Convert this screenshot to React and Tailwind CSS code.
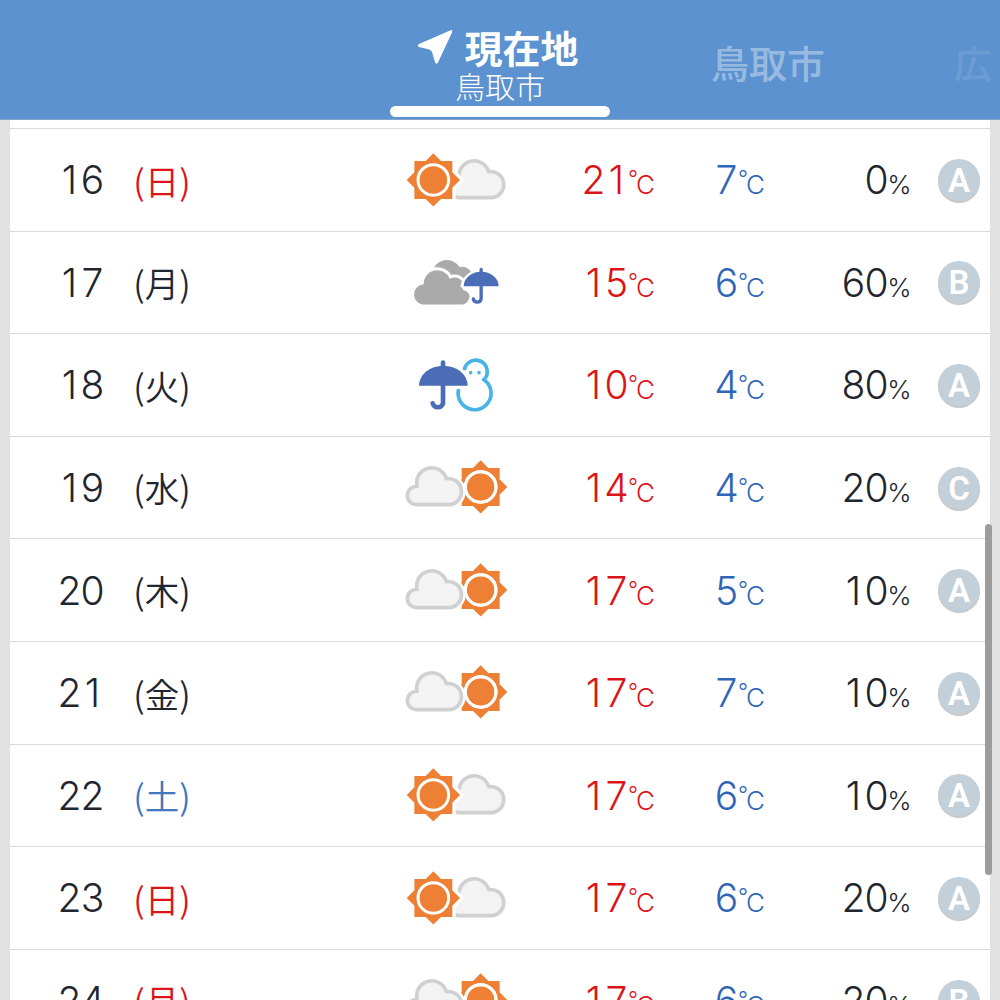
const days = [
  { date: 16, day: '日', icon: 'sunCloud', high: 21, low: 7, rain: 0, grade: 'A' },
  { date: 17, day: '月', icon: 'cloudRain', high: 15, low: 6, rain: 60, grade: 'B' },
  { date: 18, day: '火', icon: 'rainSnow', high: 10, low: 4, rain: 80, grade: 'A' },
  { date: 19, day: '水', icon: 'cloudSun', high: 14, low: 4, rain: 20, grade: 'C' },
  { date: 20, day: '木', icon: 'cloudSun', high: 17, low: 5, rain: 10, grade: 'A' },
  { date: 21, day: '金', icon: 'cloudSun', high: 17, low: 7, rain: 10, grade: 'A' },
  { date: 22, day: '土', icon: 'sunCloud', high: 17, low: 6, rain: 10, grade: 'A' },
  { date: 23, day: '日', icon: 'sunCloud', high: 17, low: 6, rain: 20, grade: 'A' },
  { date: 24, day: '月', holiday: true, icon: 'cloudSun', high: 17, low: 6, rain: 20, grade: 'B' },
];

function dayColor({ day, holiday }) {
  if (day === '日' || holiday) return 'text-[#dc1418]';
  if (day === '土') return 'text-[#3f77c0]';
  return 'text-[#1f2630]';
}

function Sun({ x }) {
  return (
    <g transform={`translate(${x} 153)`}>
      <path
        d="M-57 -57H-23L0 -80L23 -57H57V-23L80 0L57 23V57H23L0 80L-23 57H-57V23L-80 0L-57 -23Z"
        fill="#ee8035"
        stroke="#fff"
        strokeWidth="20"
        strokeLinejoin="round"
        paintOrder="stroke"
      />
      <circle r="46" fill="none" stroke="#fff" strokeWidth="9" />
    </g>
  );
}

function Cloud({ x = 0 }) {
  const d = 'M78 206A27.500 27.500 0 0 1 81 151A45.500 45.500 0 0 1 169 128A38.800 38.800 0 1 1 181 206Z';
  return (
    <g transform={`translate(${x} 0)`} strokeLinejoin="round">
      <path d={d} fill="#fff" stroke="#fff" strokeWidth="25" />
      <path d={d} fill="#f3f3f3" stroke="#d0d0d0" strokeWidth="11" />
    </g>
  );
}

function WeatherIcon({ name }) {
  return (
    <svg viewBox="0 0 390 308" className="w-[130px] h-[102.6px] shrink-0">
      {name === 'sunCloud' && (
        <>
          <Cloud x={127} />
          <Sun x={130} />
        </>
      )}
      {name === 'cloudSun' && (
        <>
          <Sun x={272} />
          <Cloud />
          <circle cx="272" cy="153" r="46" fill="none" stroke="#fff" strokeWidth="9" />
        </>
      )}
      {name === 'cloudRain' && (
        <g transform="translate(1 39)">
          <path d="M126 85A44 44 0 0 1 207 69Q228 65 242 83L215 120H150Z" fill="#aaa" />
          <path
            d="M103 182A30.500 30.500 0 0 1 100 121A40.500 40.500 0 0 1 178 104Q201 94 216 112Q208 127 219 138Q236 142 238 158Q234 178 218 182Z"
            fill="#aaa"
            stroke="#fff"
            strokeWidth="18"
            strokeLinejoin="round"
            paintOrder="stroke"
          />
          <path d="M210 128Q217 88 263 76V65H281V76Q325 84 337 128L284 137V180H240V160H258V137Z" fill="#fff" />
          <path d="M220 127A52.500 44 0 0 1 325 127Z" fill="#4b6cb7" />
          <path d="M272.500 76V165A12 12 0 0 1 249 165" fill="none" stroke="#4b6cb7" strokeWidth="10" strokeLinecap="round" />
        </g>
      )}
      {name === 'rainSnow' && (
        <g transform="translate(0 34)">
          <path d="M223 75A34.500 34.500 0 1 1 282 103A49.500 49.500 0 1 1 206 131" fill="none" stroke="#48b4e6" strokeWidth="11" />
          <circle cx="242" cy="82" r="5.500" fill="#48b4e6" />
          <circle cx="267" cy="82" r="5.500" fill="#48b4e6" />
          <path
            d="M87 121A73 60 0 0 1 233 121Z"
            fill="#4b6cb7"
            stroke="#fff"
            strokeWidth="18"
            paintOrder="stroke"
          />
          <path d="M159 52V174A16 16 0 0 1 128 174" fill="none" stroke="#4b6cb7" strokeWidth="14" strokeLinecap="round" />
        </g>
      )}
    </svg>
  );
}

// every digit gets the same width, the font's own tabular "1" has a foot
function Digits({ value }) {
  return (
    <span className="flex text-[39px]">
      {String(value).split('').map((n, i) => (
        <span key={i} className="flex w-[23px] justify-center">{n}</span>
      ))}
    </span>
  );
}

function Temp({ value, className }) {
  return (
    <div className={`flex items-baseline justify-end ${className}`}>
      <Digits value={value} />
      <span className="flex w-[27px] items-baseline">
        <span className="w-[8px] pb-[5px] -mt-[5px] text-[22px] [align-self:flex-start]">°</span>
        <span className="text-[26px]">C</span>
      </span>
    </div>
  );
}

function DayRow({ item }) {
  return (
    <li className="flex items-center h-[102.600px] shrink-0 border-t border-[#dadada] font-light leading-none text-[#1f2630]">
      <span className="flex w-[94px] justify-end">
        <Digits value={item.date} />
      </span>
      <span className={`ml-[27px] w-[62px] flex justify-center text-[34.500px] font-['Noto_Sans_CJK_JP',sans-serif] font-[350] ${dayColor(item)}`}>
        ({item.day})
      </span>
      <span className="ml-[197px]">
        <WeatherIcon name={item.icon} />
      </span>
      <Temp value={item.high} className="w-[135px] text-[#dc1418]" />
      <Temp value={item.low} className="w-[110px] text-[#2f65b9]" />
      <div className="flex w-[146px] items-baseline justify-end">
        <Digits value={item.rain} />
        <span className="flex w-[23px] justify-center text-[26px]">%</span>
      </div>
      <span className="ml-[27px] flex h-[42px] w-[42px] items-center justify-center rounded-full bg-[#c3cfd9] pt-px font-['Roboto',sans-serif] text-[33px] font-semibold text-white shadow-[0_2px_0_#c9c9c9]">
        {item.grade}
      </span>
    </li>
  );
}

export default function App() {
  return (
    <div className="relative flex h-[1000px] w-[1000px] flex-col overflow-hidden bg-[#e2e2e2] font-['Inter','Noto_Sans_CJK_JP',sans-serif]">
      <header className="flex h-[120px] shrink-0 overflow-hidden border-b border-[#86a5c6] bg-[#5b92cf] font-['Noto_Sans_CJK_JP',sans-serif] text-white">
        <div className="ml-[390px] flex w-[220px] shrink-0 flex-col items-center pt-[27px]">
          <div className="flex items-center gap-[11px] pr-[4px]">
            <svg viewBox="0 0 36 36" className="h-9 w-9">
              <path d="M2 15L33 1.500Q36 0 35 3.500L21 33.500Q19 36 18 33L15 23Q14.500 21.500 12.500 20.500L2 18Q-0.500 16.500 2 15Z" fill="currentColor" />
            </svg>
            <span className="text-[38px] font-bold leading-[40px]">現在地</span>
          </div>
          <span className="mt-[3px] text-[30px] font-light leading-[30px]">鳥取市</span>
          <span className="mt-[6px] h-[11px] w-full shrink-0 rounded-full bg-white" />
        </div>
        <span className="ml-[101px] mt-[42px] shrink-0 text-[38px] font-medium leading-[40px] text-white/40">鳥取市</span>
        <span className="ml-[129px] mt-[42px] shrink-0 text-[38px] font-medium leading-[40px] text-white/10">広</span>
      </header>

      <ul className="mx-[10px] flex min-h-0 grow flex-col overflow-hidden bg-white pt-[8px]">
        {days.map((item) => (
          <DayRow key={item.date} item={item} />
        ))}
      </ul>

      <div className="absolute left-[985px] top-[524px] h-[351px] w-[7px] rounded-full bg-[#9c9c9c]" />
    </div>
  );
}
